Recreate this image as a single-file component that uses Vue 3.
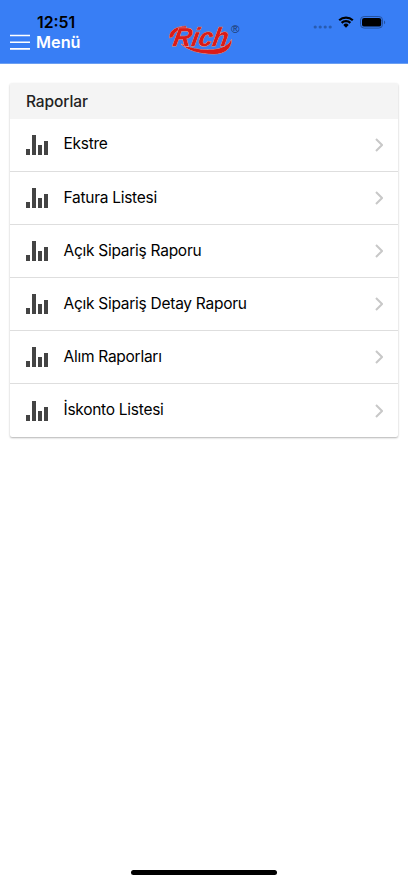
<script setup>
import { ref } from 'vue'

const reports = ref([
  'Ekstre',
  'Fatura Listesi',
  'Açık Sipariş Raporu',
  'Açık Sipariş Detay Raporu',
  'Alım Raporları',
  'İskonto Listesi'
])
</script>

<template>
  <div class="page">
    <header class="toolbar">
      <div class="status">
        <span class="time">12:51</span>
        <svg class="dots" width="20" height="4" viewBox="0 0 20 4">
          <circle cx="2.2" cy="2" r="1.6" />
          <circle cx="7.2" cy="2" r="1.6" />
          <circle cx="12.2" cy="2" r="1.6" />
          <circle cx="17.2" cy="2" r="1.6" />
        </svg>
        <svg class="wifi" width="16" height="12" viewBox="0 0 16 12">
          <path d="M1.2 4.3a9.8 9.8 0 0 1 13.6 0M3.6 6.9a6.3 6.3 0 0 1 8.8 0" />
          <path class="solid" d="M5.3 8.9a3.8 3.8 0 0 1 5.4 0L8 11.7z" />
        </svg>
        <svg class="battery" width="26" height="13" viewBox="0 0 26 13">
          <rect class="shell" x="0.5" y="0.5" width="22" height="11.6" rx="3.6" />
          <rect x="2" y="2" width="19.2" height="8.6" rx="2.2" />
          <path class="cap" d="M24 4.4c1.6.5 1.6 3.3 0 3.8z" />
        </svg>
      </div>

      <div class="nav">
        <button class="menu">
          <svg width="20" height="16" viewBox="0 0 20 16">
            <path d="M0 1.5h20M0 8.2h20M0 14.9h20" />
          </svg>
          <span>Menü</span>
        </button>
      </div>

      <svg class="logo" width="84" height="44" viewBox="0 0 84 44">
        <g class="mark">
          <path d="M19 26C28 30 38 32.4 49 31.8C58 31.2 66 28.6 69.5 21.5C69.5 31 62 36 52 36C38 36 26 32.6 19 26z" />
          <path d="M7.6 20C7 12.6 14 8.4 24 8.2L24 11.2C16 11.6 11.6 14 11.4 18.2z" />
          <text x="11" y="28" textLength="55" lengthAdjust="spacingAndGlyphs" transform="translate(4 0) skewX(-10)">Rich</text>
        </g>
        <text class="reg" x="69" y="14.6">®</text>
      </svg>
    </header>

    <main class="card">
      <h2 class="title">Raporlar</h2>
      <ul class="list">
        <li v-for="item in reports" :key="item" class="row">
          <svg class="chart" width="22" height="20" viewBox="0 0 22 20">
            <path d="M0 14h4v6H0zM6 0h4v20H6zM12 10h4v10h-4zM18 6h4v14h-4z" />
          </svg>
          <span class="label">{{ item }}</span>
          <svg class="arrow" width="8" height="14" viewBox="0 0 8 14">
            <path d="M1 1l6 6-6 6" />
          </svg>
        </li>
      </ul>
    </main>

    <div class="home-bar"></div>
  </div>
</template>

<style>
body {
  background: #fff;
}
</style>

<style scoped>
.page {
  display: flex;
  flex-direction: column;
  height: 883px;
  box-sizing: border-box;
  font-family: Inter, "Liberation Sans", sans-serif;
  color: #000;
}

.toolbar {
  position: relative;
  height: 64px;
  box-sizing: border-box;
  background: #387ef5;
  border-bottom: 1px solid #6b9ff2;
}

.status {
  display: flex;
  align-items: center;
  height: 18px;
  padding: 13px 22px 0 37px;
  margin-bottom: 1px;
}

.time {
  font-size: 15.8px;
  font-weight: 600;
  line-height: 18px;
  padding-top: 2px;
  margin-right: auto;
}

.dots {
  margin: 9px 5px 0 0;
  fill: #285bb0;
}

.wifi {
  margin-right: 6px;
  fill: none;
  stroke: #000;
  stroke-width: 2.2;
}

.wifi .solid {
  fill: #000;
  stroke: none;
}

.battery .shell {
  fill: none;
  stroke: #2452a0;
}

.battery .cap {
  fill: #2452a0;
}

.nav {
  display: flex;
  padding-left: 10px;
}

.menu {
  display: flex;
  align-items: center;
  gap: 6px;
  height: 20px;
  padding: 0;
  border: 0;
  background: none;
  color: #fff;
  font-family: inherit;
  font-size: 16.3px;
  font-weight: 600;
  line-height: 20px;
}

.menu svg {
  fill: none;
  stroke: #fff;
  stroke-width: 1.6;
}

.logo {
  position: absolute;
  left: 162px;
  top: 18px;
  overflow: visible;
}

.mark {
  fill: #dc1b16;
  stroke: #e5b5c4;
  stroke-width: 0.9;
  paint-order: stroke;
  filter: drop-shadow(0.7px 0.7px 0 #433145);
}

.mark text {
  font-family: "Liberation Sans", sans-serif;
  font-size: 26px;
  font-style: italic;
  font-weight: 700;
}

.reg {
  font-family: "Liberation Sans", sans-serif;
  font-size: 11.5px;
  fill: #1b3566;
}

.card {
  margin: 19px 10px 0;
  border-radius: 2px;
  background: #fff;
  box-shadow: 0 1px 2px rgba(0, 0, 0, 0.3);
  overflow: hidden;
}

.title {
  margin: 0;
  height: 35.7px;
  padding-left: 16px;
  background: #f4f4f4;
  color: #222;
  font-size: 15.5px;
  font-weight: 500;
  letter-spacing: -0.1px;
  line-height: 37px;
}

.list {
  margin: 0;
  padding: 0;
  list-style: none;
}

.row {
  display: flex;
  align-items: center;
  box-sizing: border-box;
  height: 53.1px;
  padding: 0 15px 0 16px;
  border-bottom: 1px solid #dedede;
}

.row:last-child {
  border-bottom: 0;
}

.chart {
  margin-right: 15.5px;
  fill: #444;
}

.label {
  flex: 1;
  font-size: 15.5px;
  letter-spacing: -0.27px;
  line-height: 22px;
  padding-bottom: 0.6px;
}

.row:last-child .label {
  padding-bottom: 2px;
}

.arrow {
  fill: none;
  stroke: #c8c8c8;
  stroke-width: 2;
}

.home-bar {
  width: 146px;
  height: 5px;
  margin: auto auto 8px;
  border-radius: 3px;
  background: #000;
}
</style>
